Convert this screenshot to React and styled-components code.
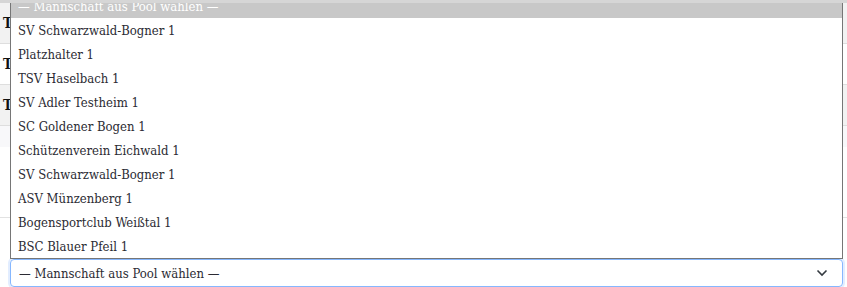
import React from "react";
import styled, { createGlobalStyle } from "styled-components";

const GlobalStyle = createGlobalStyle`
  html, body { margin: 0; padding: 0; background: #fff; }
  body { font-family: "DejaVu Serif Condensed", "DejaVu Serif", "Liberation Serif", serif; font-stretch: semi-condensed; color: #2b2b33; overflow: hidden; }
  * { box-sizing: border-box; }
`;

const Page = styled.div`
  position: relative;
  width: 847px;
  height: 287px;
  overflow: hidden;
  display: flex;
  flex-direction: column;
  border-top: 3px solid #d6d6d6;
`;

const Table = styled.div`
  display: flex;
  flex-direction: column;
`;

const Row = styled.div`
  height: 41px;
  display: flex;
  align-items: center;
  padding-left: 3px;
  background: ${(p) => (p.$striped ? "#f2f2f2" : "#fff")};
  border-bottom: 1px solid #dedede;
  font-weight: bold;
  font-size: 14px;
  color: #111;
`;

const Footer = styled.div`
  height: 21px;
  background: #f8f8fa;
`;

const Form = styled.div`
  display: flex;
  flex-direction: column;
  padding: 36px 4px 0 10px;
`;

const Input = styled.div`
  height: 25px;
  border: 2px solid #1a73e8;
  border-radius: 4px;
`;

const Divider = styled.div`
  height: 1px;
  background: #e2e2e2;
  margin: 9px -4px 0 -10px;
`;

const SelectBox = styled.div`
  margin-top: 41px;
  height: 28px;
  border: 1px solid #86b7fe;
  border-radius: 4px;
  box-shadow: 0 0 0 2px rgba(13, 110, 253, 0.12);
  display: flex;
  align-items: center;
  justify-content: space-between;
  padding: 0 14px 0 8px;
  font-size: 13px;
  color: #2b2b33;
`;

const ListBox = styled.div`
  position: absolute;
  left: 10px;
  top: -10px;
  width: 833px;
  border: 1px solid #767676;
  background: #fff;
  display: flex;
  flex-direction: column;
`;

const Option = styled.div`
  height: 24px;
  display: flex;
  align-items: center;
  padding-left: 7px;
  font-size: 13px;
  background: ${(p) => (p.$selected ? "#c8c8c8" : "#fff")};
  color: ${(p) => (p.$selected ? "#fff" : "#2b2b33")};
`;

const Chevron = () => (
  <svg width="12" height="8" viewBox="0 0 12 8">
    <polyline points="1.5,1.5 6,6 10.5,1.5" fill="none" stroke="#343a40" strokeWidth="1.6" />
  </svg>
);

const placeholder = "— Mannschaft aus Pool wählen —";
const teams = [
  "SV Schwarzwald-Bogner 1",
  "Platzhalter 1",
  "TSV Haselbach 1",
  "SV Adler Testheim 1",
  "SC Goldener Bogen 1",
  "Schützenverein Eichwald 1",
  "SV Schwarzwald-Bogner 1",
  "ASV Münzenberg 1",
  "Bogensportclub Weißtal 1",
  "BSC Blauer Pfeil 1",
];

export default function App() {
  return (
    <>
      <GlobalStyle />
      <Page>
        <Table>
          <Row $striped>T</Row>
          <Row>T</Row>
          <Row $striped>T</Row>
          <Footer />
        </Table>
        <Form>
          <Input />
          <Divider />
          <SelectBox>
            <span>{placeholder}</span>
            <Chevron />
          </SelectBox>
        </Form>
        <ListBox role="listbox">
          <Option $selected>{placeholder}</Option>
          {teams.map((t, i) => (
            <Option key={i}>{t}</Option>
          ))}
        </ListBox>
      </Page>
    </>
  );
}
